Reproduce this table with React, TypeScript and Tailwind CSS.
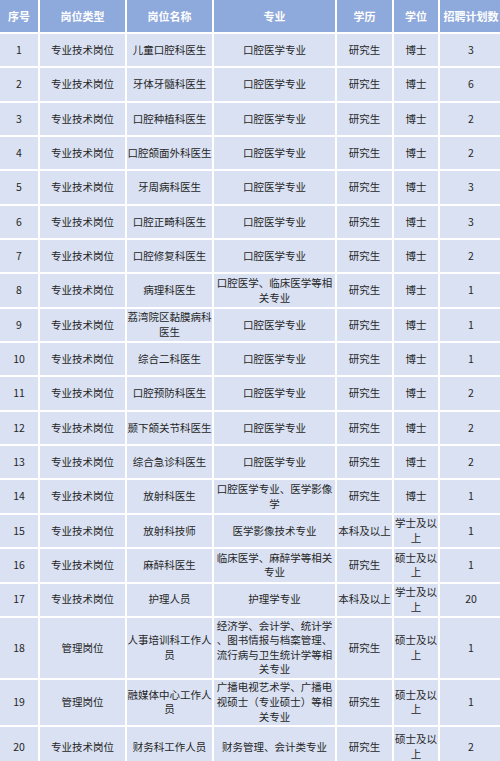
import React from "react";

type Row = {
  no: string;
  type: string;
  name: string[];
  major: string[];
  edu: string;
  degree: string[];
  count: string;
};

const r = (
  no: string,
  type: string,
  name: string[],
  major: string[],
  edu: string,
  degree: string[],
  count: string
): Row => ({ no, type, name, major, edu, degree, count });

const rows: Row[] = [
  r("1", "专业技术岗位", ["儿童口腔科医生"], ["口腔医学专业"], "研究生", ["博士"], "3"),
  r("2", "专业技术岗位", ["牙体牙髓科医生"], ["口腔医学专业"], "研究生", ["博士"], "6"),
  r("3", "专业技术岗位", ["口腔种植科医生"], ["口腔医学专业"], "研究生", ["博士"], "2"),
  r("4", "专业技术岗位", ["口腔颌面外科医生"], ["口腔医学专业"], "研究生", ["博士"], "2"),
  r("5", "专业技术岗位", ["牙周病科医生"], ["口腔医学专业"], "研究生", ["博士"], "3"),
  r("6", "专业技术岗位", ["口腔正畸科医生"], ["口腔医学专业"], "研究生", ["博士"], "3"),
  r("7", "专业技术岗位", ["口腔修复科医生"], ["口腔医学专业"], "研究生", ["博士"], "2"),
  r("8", "专业技术岗位", ["病理科医生"], ["口腔医学、临床医学等相", "关专业"], "研究生", ["博士"], "1"),
  r("9", "专业技术岗位", ["荔湾院区黏膜病科", "医生"], ["口腔医学专业"], "研究生", ["博士"], "1"),
  r("10", "专业技术岗位", ["综合二科医生"], ["口腔医学专业"], "研究生", ["博士"], "1"),
  r("11", "专业技术岗位", ["口腔预防科医生"], ["口腔医学专业"], "研究生", ["博士"], "2"),
  r("12", "专业技术岗位", ["颞下颌关节科医生"], ["口腔医学专业"], "研究生", ["博士"], "2"),
  r("13", "专业技术岗位", ["综合急诊科医生"], ["口腔医学专业"], "研究生", ["博士"], "2"),
  r("14", "专业技术岗位", ["放射科医生"], ["口腔医学专业、医学影像", "学"], "研究生", ["博士"], "1"),
  r("15", "专业技术岗位", ["放射科技师"], ["医学影像技术专业"], "本科及以上", ["学士及以", "上"], "1"),
  r("16", "专业技术岗位", ["麻醉科医生"], ["临床医学、麻醉学等相关", "专业"], "研究生", ["硕士及以", "上"], "1"),
  r("17", "专业技术岗位", ["护理人员"], ["护理学专业"], "本科及以上", ["学士及以", "上"], "20"),
  r(
    "18",
    "管理岗位",
    ["人事培训科工作人", "员"],
    ["经济学、会计学、统计学", "、图书情报与档案管理、", "流行病与卫生统计学等相", "关专业"],
    "研究生",
    ["硕士及以", "上"],
    "1"
  ),
  r(
    "19",
    "管理岗位",
    ["融媒体中心工作人", "员"],
    ["广播电视艺术学、广播电", "视硕士（专业硕士）等相", "关专业"],
    "研究生",
    ["硕士及以", "上"],
    "1"
  ),
  r("20", "专业技术岗位", ["财务科工作人员"], ["财务管理、会计类专业"], "研究生", ["硕士及以", "上"], "2"),
];

const headers = ["序号", "岗位类型", "岗位名称", "专业", "学历", "学位", "招聘计划数"];

function Lines({ lines }: { lines: string[] }) {
  return (
    <div className="flex flex-col items-center">
      {lines.map((l, i) => (
        <span key={i} className="whitespace-nowrap">
          {l}
        </span>
      ))}
    </div>
  );
}

function Cell({ children }: { children: React.ReactNode }) {
  return (
    <div className="flex items-center justify-center bg-[#d9e1f2] text-center text-[10.5px] leading-[14.6px] text-[#262626] overflow-hidden">
      {children}
    </div>
  );
}

export default function App() {
  return (
    <div
      className="w-[500px] h-[761px] overflow-hidden bg-white"
      style={{ fontFamily: '"Microsoft YaHei", "Noto Sans CJK SC", "Noto Sans", sans-serif' }}
    >
      <div className="grid grid-cols-[38px_85px_85px_121px_55px_44px_62px] grid-rows-[32px_repeat(17,32.35px)_60px_45px_40px] gap-[2px] bg-white">
        {headers.map((h) => (
          <div
            key={h}
            className="flex items-center justify-center bg-[#8ea9db] text-[11px] font-bold text-white whitespace-nowrap"
          >
            {h}
          </div>
        ))}
        {rows.map((row) => (
          <React.Fragment key={row.no}>
            <Cell>{row.no}</Cell>
            <Cell>{row.type}</Cell>
            <Cell>
              <Lines lines={row.name} />
            </Cell>
            <Cell>
              <Lines lines={row.major} />
            </Cell>
            <Cell>
              <span className="whitespace-nowrap">{row.edu}</span>
            </Cell>
            <Cell>
              <Lines lines={row.degree} />
            </Cell>
            <Cell>{row.count}</Cell>
          </React.Fragment>
        ))}
      </div>
    </div>
  );
}
